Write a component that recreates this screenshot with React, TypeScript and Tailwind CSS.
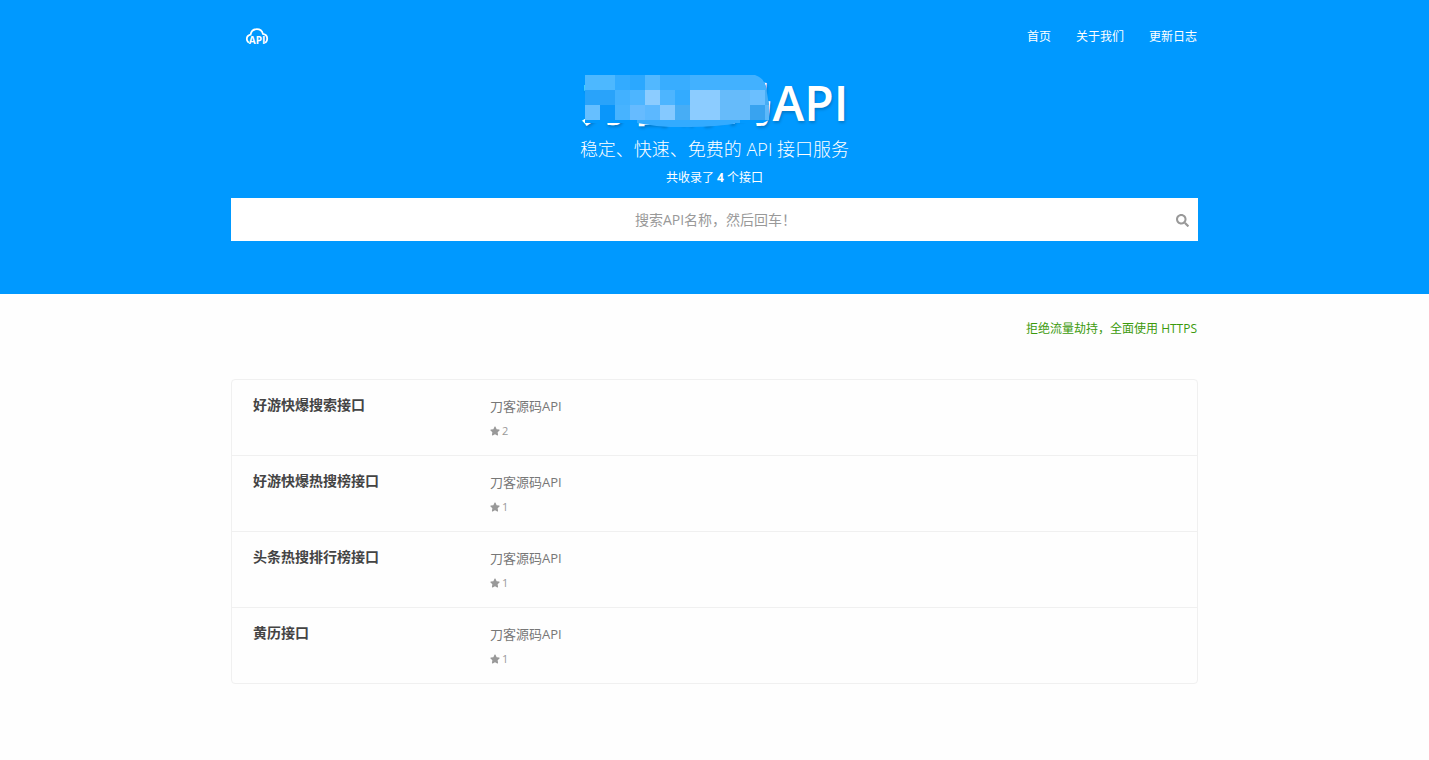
import { FaSearch, FaStar } from "react-icons/fa";

const navItems = ["首页", "关于我们", "更新日志"];

const apis = [
  { name: "好游快爆搜索接口", desc: "刀客源码API", stars: 2 },
  { name: "好游快爆热搜榜接口", desc: "刀客源码API", stars: 1 },
  { name: "头条热搜排行榜接口", desc: "刀客源码API", stars: 1 },
  { name: "黄历接口", desc: "刀客源码API", stars: 1 },
];

// One row per 15px band, one colour per 15px cell.
const mosaic = [
  ["#4db8ff", "#4db8ff", "#33abff", "#2ba8ff", "#52b8ff", "#38adff", "#38adff", "#42b1ff", "#42b1ff", "#42b1ff", "#42b1ff", "#42b1ff", "#42b1ff"],
  ["#29a3fa", "#29a3fa", "#42b1ff", "#4db5ff", "#8cccff", "#4db5ff", "#33abff", "#8cccff", "#8cccff", "#66bbfa", "#66bbfa", "#6bbfff", "#47adf5"],
  ["#66bfff", "#0a96fa", "#47b3ff", "#66bbff", "#5cb8ff", "#85c9ff", "#47adf5", "#8cccff", "#8cccff", "#66bbfa", "#66bbfa", "#38a3f0", "#5cb8fa"],
];

function CloudLogo() {
  return (
    <svg className="h-5 w-6" viewBox="0 0 24 20" fill="none" aria-hidden="true">
      <path
        d="M3.2 15.2C2.3 14.4 1.8 13.3 1.8 12.1c0-2.3 1.5-4 3.8-4.4C6.1 4.4 8.7 2.2 11.8 2.2c3 0 5.4 1.9 6.1 4.7 2.6.4 4.3 2.5 4.3 4.9 0 1.5-.5 2.7-1.5 3.6"
        stroke="white"
        strokeWidth="1.8"
        strokeLinecap="round"
      />
      <text x="12" y="17" textAnchor="middle" fill="white" fontSize="10" fontWeight="700" fontFamily="Open Sans, sans-serif">
        API
      </text>
    </svg>
  );
}

export default function App() {
  return (
    <div className="min-h-screen bg-[#fefefe] font-['Open_Sans','Noto_Sans_CJK_SC',sans-serif] text-[#666]">
      <header className="bg-[#0099ff] pb-[53px] text-white">
        <div className="mx-auto max-w-[967px]">
          <div className="flex h-[74px] items-center justify-between pr-px pl-[14px]">
            <a href="#" aria-label="API">
              <CloudLogo />
            </a>
            <nav className="flex gap-[25px] text-xs">
              {navItems.map((item) => (
                <a key={item} href="#">
                  {item}
                </a>
              ))}
            </nav>
          </div>
          <div className="flex flex-col items-center">
            <h1 className="relative text-5xl leading-[58px] font-semibold [text-shadow:1px_2px_3px_rgba(0,0,0,0.2)]">
              刀客源码API
              <svg className="absolute top-px left-1 h-[52px] w-[184px]" viewBox="0 0 184 52" aria-hidden="true">
                <clipPath id="mosaic-edge">
                  <path d="M0 0H170Q179 3 181 12L184 30V45L178 48H150V52H0Z" />
                </clipPath>
                <g clipPath="url(#mosaic-edge)">
                  <rect width="184" height="48" fill="#0099ff" />
                  <path d="M52 45H155V48Q130 52 105 52H85Q68 51 52 48Z" fill="#33abff" />
                  {mosaic.map((row, y) =>
                    row.map((color, x) => (
                      <rect key={`${x}-${y}`} x={x * 15} y={y * 15} width="15" height="15" fill={color} />
                    )),
                  )}
                </g>
              </svg>
            </h1>
            <p className="text-lg leading-[34px] font-light">稳定、快速、免费的 API 接口服务</p>
            <p className="text-xs leading-6">
              共收录了 <strong>4</strong> 个接口
            </p>
          </div>
          <form className="mt-2 flex h-[43px] items-center bg-white pr-[9px]" onSubmit={(e) => e.preventDefault()}>
            <input
              type="text"
              aria-label="搜索API名称"
              placeholder="搜索API名称，然后回车！"
              className="h-full min-w-0 flex-1 pl-6 text-center text-sm text-[#666] outline-none placeholder:text-[#999]"
            />
            <button type="submit" aria-label="搜索" className="pt-0.5 text-[#999]">
              <FaSearch className="size-[13px]" />
            </button>
          </form>
        </div>
      </header>
      <main className="mx-auto max-w-[967px]">
        <p className="pt-6 pr-px text-right text-xs leading-[22px] text-[#3c9a0c]">拒绝流量劫持，全面使用 HTTPS</p>
        <ul className="mt-[39px] rounded border border-[#f0f0f0]">
          {apis.map((api) => (
            <li key={api.name} className="flex border-b border-[#f0f0f0] px-[21px] pt-[14px] pb-3 last:border-b-0">
              <h2 className="w-[237px] text-sm leading-[22px] font-bold text-[#444]">
                <a href="#">{api.name}</a>
              </h2>
              <div>
                <p className="text-[13px] leading-6 text-[#777]">{api.desc}</p>
                <p className="flex items-center gap-0.5 text-[11px] leading-[25px] text-[#999]">
                  <FaStar className="size-[10px]" />
                  {api.stars}
                </p>
              </div>
            </li>
          ))}
        </ul>
      </main>
    </div>
  );
}
